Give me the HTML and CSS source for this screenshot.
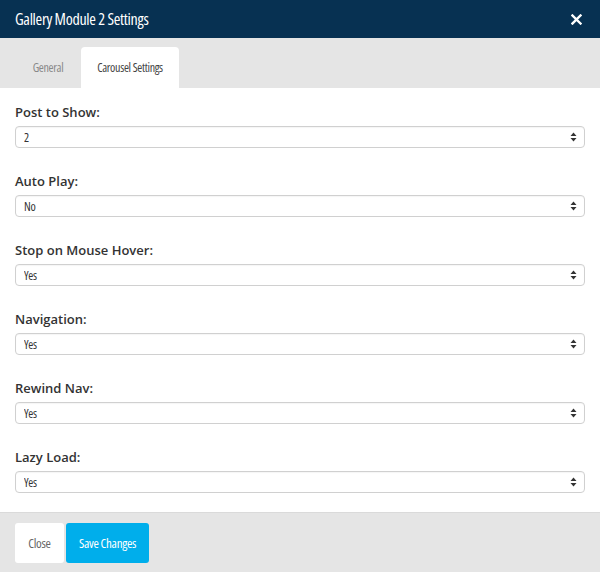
FILE: index.html
```html
<!DOCTYPE html>
<html lang="en">
<head>
  <meta charset="UTF-8">
  <meta name="viewport" content="width=device-width, initial-scale=1.0">
  <link rel="stylesheet" href="styles.css">
  <title>Gallery Module 2 Settings</title>
</head>
<body>
  <div class="modal">
    <!-- Header -->
    <div class="modal-header">
      <h4 class="modal-title">Gallery Module 2 Settings</h4>
      <button class="close-btn" aria-label="Close">
        <svg width="11" height="11" viewBox="0 0 11 11"><path d="M1.5 1.5 L9.5 9.5 M9.5 1.5 L1.5 9.5" stroke="#fff" stroke-width="2.4" stroke-linecap="square"/></svg>
      </button>
    </div>

    <!-- Tabs -->
    <div class="tabs">
      <div class="tab">General</div>
      <div class="tab active">Carousel Settings</div>
    </div>

    <!-- Body -->
    <div class="modal-body">
      <div class="form-group">
        <label>Post to Show:</label>
        <div class="select-wrap">
          <select><option>2</option></select>
          <svg class="arrows" width="7" height="12" viewBox="0 0 7 12"><path d="M3.5 1.5 L6.5 5 L0.5 5 Z M3.5 10.5 L6.5 7 L0.5 7 Z" fill="#333"/></svg>
        </div>
      </div>
      <div class="form-group">
        <label>Auto Play:</label>
        <div class="select-wrap">
          <select><option>No</option></select>
          <svg class="arrows" width="7" height="12" viewBox="0 0 7 12"><path d="M3.5 1.5 L6.5 5 L0.5 5 Z M3.5 10.5 L6.5 7 L0.5 7 Z" fill="#333"/></svg>
        </div>
      </div>
      <div class="form-group">
        <label>Stop on Mouse Hover:</label>
        <div class="select-wrap">
          <select><option>Yes</option></select>
          <svg class="arrows" width="7" height="12" viewBox="0 0 7 12"><path d="M3.5 1.5 L6.5 5 L0.5 5 Z M3.5 10.5 L6.5 7 L0.5 7 Z" fill="#333"/></svg>
        </div>
      </div>
      <div class="form-group">
        <label>Navigation:</label>
        <div class="select-wrap">
          <select><option>Yes</option></select>
          <svg class="arrows" width="7" height="12" viewBox="0 0 7 12"><path d="M3.5 1.5 L6.5 5 L0.5 5 Z M3.5 10.5 L6.5 7 L0.5 7 Z" fill="#333"/></svg>
        </div>
      </div>
      <div class="form-group">
        <label>Rewind Nav:</label>
        <div class="select-wrap">
          <select><option>Yes</option></select>
          <svg class="arrows" width="7" height="12" viewBox="0 0 7 12"><path d="M3.5 1.5 L6.5 5 L0.5 5 Z M3.5 10.5 L6.5 7 L0.5 7 Z" fill="#333"/></svg>
        </div>
      </div>
      <div class="form-group">
        <label>Lazy Load:</label>
        <div class="select-wrap">
          <select><option>Yes</option></select>
          <svg class="arrows" width="7" height="12" viewBox="0 0 7 12"><path d="M3.5 1.5 L6.5 5 L0.5 5 Z M3.5 10.5 L6.5 7 L0.5 7 Z" fill="#333"/></svg>
        </div>
      </div>
    </div>

    <!-- Footer -->
    <div class="modal-footer">
      <button class="btn btn-default">Close</button>
      <button class="btn btn-primary">Save Changes</button>
    </div>
  </div>
</body>
</html>
```

FILE: styles.css
```css
/* General Styles */
body {
  margin: 0;
  font-family: "Open Sans", Arial, sans-serif;
  background: #fff;
}

.modal {
  width: 600px;
  height: 572px;
  display: flex;
  flex-direction: column;
}

/* Narrow text (title, tabs, selects, buttons) */
.modal-title, .tab, .select-wrap select, .btn {
  font-family: "Open Sans", "DejaVu Sans Condensed", sans-serif;
  font-stretch: 75%;
  letter-spacing: -0.3px;
  white-space: nowrap;
}

/* Header */
.modal-header {
  flex-shrink: 0;
  height: 38px;
  padding: 0 15px;
  background: #073152;
  display: flex;
  align-items: center;
  justify-content: space-between;
}

.modal-title {
  margin: 0;
  font-weight: normal;
  font-size: 16px;
  color: #fff;
}

.close-btn {
  border: 0;
  background: none;
  padding: 0;
  margin-right: 3px;
  display: flex;
}

/* Tabs */
.tabs {
  flex-shrink: 0;
  height: 50px;
  box-sizing: border-box;
  padding: 9px 0 0 15px;
  background: #e5e5e5;
  display: flex;
}

.tab {
  width: 66px;
  display: flex;
  align-items: center;
  justify-content: center;
  font-size: 12px;
  color: #888;
}

.tab.active {
  width: 98px;
  background: #fff;
  color: #444;
  border-radius: 4px 4px 0 0;
}

/* Body */
.modal-body {
  flex: 1;
  padding: 15px 15px 0;
}

.form-group {
  margin-bottom: 24px;
}

.form-group:last-child {
  margin-bottom: 0;
}

.form-group label {
  display: block;
  font-size: 13px;
  line-height: 18px;
  font-weight: 600;
  color: #333;
  margin-bottom: 5px;
}

.select-wrap {
  position: relative;
}

.select-wrap select {
  display: block;
  appearance: none;
  -webkit-appearance: none;
  width: 100%;
  height: 22px;
  margin: 0;
  padding: 0 8px;
  border: 1px solid #d0d0d0;
  border-radius: 4px;
  background: #fff;
  font-size: 12px;
  color: #333;
  box-shadow: inset 0 1px 1px rgba(0, 0, 0, 0.04);
}

.arrows {
  position: absolute;
  right: 8px;
  top: 5px;
  pointer-events: none;
}

/* Footer */
.modal-footer {
  flex-shrink: 0;
  height: 60px;
  box-sizing: border-box;
  padding: 10px 15px 0;
  border-top: 1px solid #dadada;
  background: #e5e5e5;
  display: flex;
  gap: 2px;
  align-items: flex-start;
}

.btn {
  height: 40px;
  border: 0;
  border-radius: 3px;
  padding: 0;
  font-size: 13px;
}

.btn-default {
  width: 49px;
  background: #fff;
  color: #666;
}

.btn-primary {
  width: 83px;
  background: #00aeeb;
  color: #fff;
}
```
